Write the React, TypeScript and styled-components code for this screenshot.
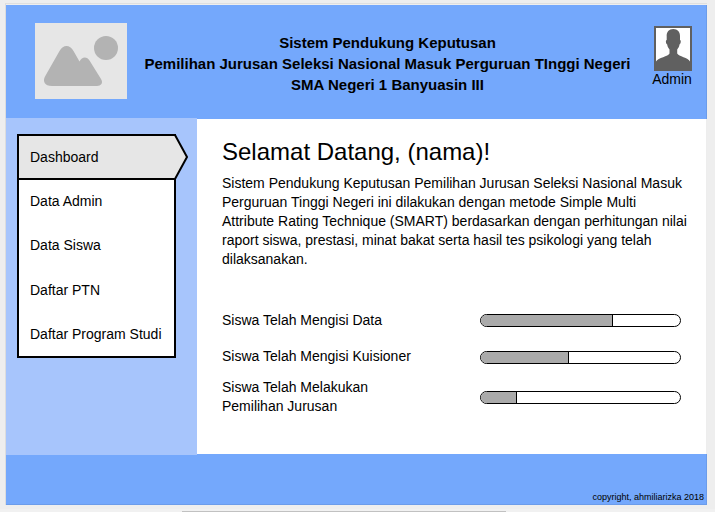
import React from "react";
import styled, { createGlobalStyle } from "styled-components";

const GlobalStyle = createGlobalStyle`
  *, *::before, *::after { box-sizing: border-box; }
  body {
    margin: 0;
    background: #eeeeee;
    color: #000;
    font: 14px/19px "Liberation Sans", Arial, sans-serif;
    overflow: hidden;
  }
  h1, h2, p, ul { margin: 0; padding: 0; }
  svg { display: block; }
`;

const Viewport = styled.div`
  width: 715px;
  height: 512px;
  padding: 3px 0 0 5px;
  display: flex;
  flex-direction: column;
`;

const Frame = styled.div`
  width: 702px;
  height: 502px;
  flex: none;
  border-top: 1px solid #dfdfdf;
  border-left: 1px solid #dddddd;
  padding-top: 1px;
  display: flex;
  flex-direction: column;
  position: relative;

  &::after {
    content: "";
    position: absolute;
    inset: 1px 0 0 0;
    border-right: 1px solid rgba(0, 0, 0, 0.07);
    border-bottom: 1px solid rgba(0, 0, 0, 0.07);
    pointer-events: none;
  }
`;

const Header = styled.header`
  height: 114px;
  flex: none;
  background: #74a8fc;
  display: flex;
  align-items: flex-start;
  padding: 18px 14px 0 29px;
`;

const Title = styled.h1`
  flex: 1;
  padding: 9px 4px 0 0;
  font-size: 15px;
  line-height: 21px;
  font-weight: 700;
  text-align: center;
  white-space: nowrap;
`;

const Line = styled.span`
  display: block;
  white-space: nowrap;
`;

const Account = styled.div`
  width: 41px;
  padding-top: 3px;
  display: flex;
  flex-direction: column;
  align-items: center;
  line-height: 17px;
`;

const AccountName = styled.span`
  margin-right: 1px;
`;

const Body = styled.div`
  height: 335px;
  flex: none;
  display: flex;
  background: #fff;
`;

const Sidebar = styled.nav`
  width: 191px;
  height: 337px;
  margin-top: -1px;
  padding: 16px 0 0 11px;
  flex: none;
  background: #a7c5fc;
  z-index: 1;
`;

const Menu = styled.ul`
  width: 159px;
  height: 224px;
  border: 2px solid #000;
  background: #fff;
  list-style: none;
`;

const MenuItem = styled.li`
  height: 44.3px;
  padding: 0 0 1px 11px;
  display: flex;
  align-items: center;
  white-space: nowrap;
`;

const ActiveItem = styled(MenuItem)`
  height: 44px;
  padding-bottom: 2px;
  position: relative;
  z-index: 0;

  svg {
    position: absolute;
    left: -2px;
    top: -2px;
    z-index: -1;
  }
`;

const Main = styled.main`
  flex: 1;
  padding: 16px 0 0 25px;
`;

const Welcome = styled.h2`
  font-size: 24px;
  line-height: 34px;
  font-weight: 400;
`;

const Intro = styled.p`
  margin-top: 5px;
`;

const Stats = styled.div`
  margin-top: 32px;
  display: grid;
  grid-template-columns: 258px 201px;
  grid-template-rows: 38px 36px 44px;
  align-items: center;
`;

const StatLabel = styled.div<{ $raise?: number }>`
  padding-bottom: ${({ $raise = 0 }) => $raise * 2}px;
`;

const Track = styled.div`
  height: 13px;
  border: 1px solid #000;
  border-radius: 7px;
  overflow: hidden;
  background: #fff;
`;

const Fill = styled.div`
  height: 100%;
  background: #aaaaaa;
  border-right: 1px solid #000;
`;

const Footer = styled.footer`
  height: 51px;
  flex: none;
  padding: 0 3px 2px 0;
  background: #74a8fc;
  display: flex;
  align-items: flex-end;
  justify-content: flex-end;
  font-size: 9px;
  line-height: 12px;
`;

const ScrollTrack = styled.div`
  margin: 4px 0 0 -5px;
  height: 3px;
  background: #f1f1f1;
  display: flex;
  align-items: flex-end;
`;

const ScrollThumb = styled.div`
  margin-left: 182px;
  width: 324px;
  height: 1px;
  background: #c1c1c1;
`;

const ImagePlaceholder = () => (
  <svg width="92" height="76" viewBox="0 0 92 76">
    <rect width="92" height="76" fill="#e6e6e6" />
    <g fill="#b3b3b3">
      <circle cx="71" cy="25" r="12" />
      <path d="M10 53.500 24.500 28Q27.500 23 31.500 23T38.500 28L44.500 38.500C47 33.500 52 33.500 54.500 37.500L66 56C68.500 60 66 63 62 63H17C9.500 63 7.500 58 10 53.500Z" />
    </g>
  </svg>
);

const Avatar = () => (
  <svg width="38" height="45" viewBox="0 0 38 45">
    <rect x="1" y="1" width="36" height="43" fill="#fff" stroke="#606060" strokeWidth="2" />
    <path
      d="M19.300 3C15 3 12.300 6 12.700 10.500V14C11.500 14 11.700 17.800 13.200 18.500C13.500 20.500 14.200 22 15.500 23.500V27.500C14.500 30.500 4 31.500 2 35.500V44H36V35.500C34.500 31.500 24.500 30.500 23.200 27.500V23.500C24.500 22 25.200 20.500 25.500 18.500C27 17.800 27.200 14 26 14V10.500C26.300 6 23.500 3 19.300 3Z"
      fill="#606060"
    />
  </svg>
);

const ArrowTab = () => (
  <svg width="173" height="46" viewBox="0 0 173 46">
    <path d="M1 1H158L170 23 158 45H1Z" fill="#e6e6e6" stroke="#000" strokeWidth="2" />
  </svg>
);

const titleLines = [
  "Sistem Pendukung Keputusan",
  "Pemilihan Jurusan Seleksi Nasional Masuk Perguruan TInggi Negeri",
  "SMA Negeri 1 Banyuasin III",
];

const introLines = [
  "Sistem Pendukung Keputusan Pemilihan Jurusan Seleksi Nasional Masuk",
  "Perguruan Tinggi Negeri ini dilakukan dengan metode Simple Multi",
  "Attribute Rating Technique (SMART) berdasarkan dengan perhitungan nilai",
  "raport siswa, prestasi, minat bakat serta hasil tes psikologi yang telah",
  "dilaksanakan.",
];

const menuItems = ["Data Admin", "Data Siswa", "Daftar PTN", "Daftar Program Studi"];

const stats = [
  { lines: ["Siswa Telah Mengisi Data"], width: 132, raise: 0 },
  { lines: ["Siswa Telah Mengisi Kuisioner"], width: 88, raise: 1 },
  { lines: ["Siswa Telah Melakukan", "Pemilihan Jurusan"], width: 36, raise: 0 },
];

export default function App() {
  return (
    <>
      <GlobalStyle />
      <Viewport>
        <Frame>
          <Header>
            <ImagePlaceholder />
            <Title>
              {titleLines.map((text) => (
                <Line key={text}>{text}</Line>
              ))}
            </Title>
            <Account>
              <Avatar />
              <AccountName>Admin</AccountName>
            </Account>
          </Header>
          <Body>
            <Sidebar>
              <Menu>
                <ActiveItem>
                  <ArrowTab />
                  Dashboard
                </ActiveItem>
                {menuItems.map((item) => (
                  <MenuItem key={item}>{item}</MenuItem>
                ))}
              </Menu>
            </Sidebar>
            <Main>
              <Welcome>Selamat Datang, (nama)!</Welcome>
              <Intro>
                {introLines.map((line) => (
                  <Line key={line}>{line}</Line>
                ))}
              </Intro>
              <Stats>
                {stats.map(({ lines, width, raise }) => (
                  <React.Fragment key={lines[0]}>
                    <StatLabel $raise={raise}>
                      {lines.map((line) => (
                        <Line key={line}>{line}</Line>
                      ))}
                    </StatLabel>
                    <Track>
                      <Fill style={{ width }} />
                    </Track>
                  </React.Fragment>
                ))}
              </Stats>
            </Main>
          </Body>
          <Footer>copyright, ahmiliarizka 2018</Footer>
        </Frame>
        <ScrollTrack>
          <ScrollThumb />
        </ScrollTrack>
      </Viewport>
    </>
  );
}
